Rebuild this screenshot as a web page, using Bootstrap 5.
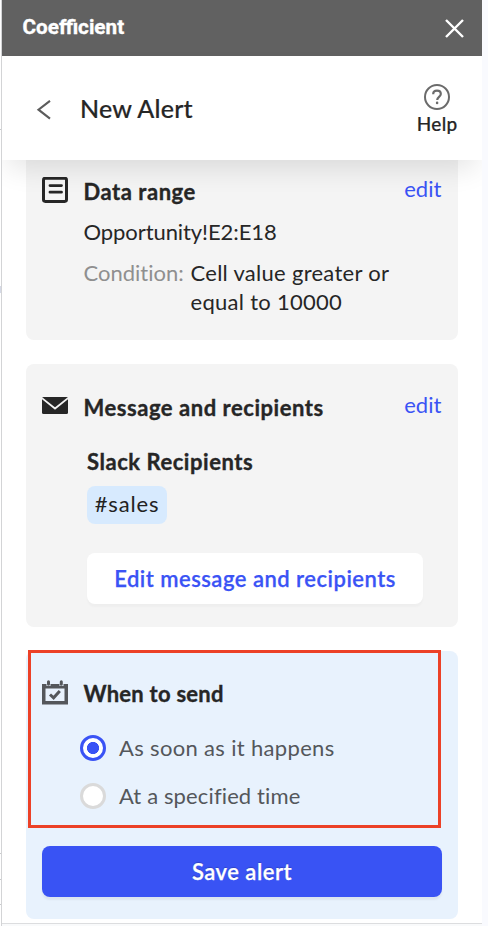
<!DOCTYPE html>
<html lang="en">
<head>
<meta charset="utf-8">
<meta name="viewport" content="width=device-width, initial-scale=1">
<title>Coefficient</title>
<link href="https://cdn.jsdelivr.net/npm/bootstrap@5.3.0/dist/css/bootstrap.min.css" rel="stylesheet">
<style>
body{font-family:Lato,"Open Sans",sans-serif;font-size:22px;line-height:29px;color:#262626;background:#f9fafe;height:926px;overflow:hidden;font-variant-ligatures:none}
.page-edge{width:2px;background:linear-gradient(90deg,#fff 1px,#d3d4d6 1px)}
.edge-tick{left:0;width:1px;height:1px;background:#c9cacc}
.tick-a{top:129px}.tick-b{top:286px;height:7px;background:#d5d9e6}.tick-c{top:853px}.tick-d{top:879px}.tick-e{top:904px}
.panel{width:480px}
.screen{height:923px}
.foot-rule{height:3px;border-top:1px solid #dcdddf;background:#f9fafb}
.title-bar{height:56px;background:#616161;padding:0 18px 0 20.5px}
.brand{font:700 20.7px/24px Roboto,sans-serif;margin-bottom:3px;font-variant-ligatures:normal;-webkit-text-stroke:.35px #fff}
.head{height:104px;padding:0 24.5px 0 33px;z-index:2;box-shadow:0 14px 26px -6px rgba(0,0,0,.11)}
.head-title{font-size:25px;font-weight:500;letter-spacing:.2px;margin-left:29px;-webkit-text-stroke:.2px #262626}
.help{font-size:19px;font-weight:500;line-height:24px;letter-spacing:.3px;padding-top:28px;-webkit-text-stroke:.2px #262626}
.help svg{margin-bottom:2px}
.sections{padding:0 24px}
.section-box{background:#f4f4f4;border-radius:8px;padding:0 16px}
.box-range{height:180px;padding-top:17px;border-radius:0 0 8px 8px}
.box-message{height:263px;padding-top:29px;margin-top:24px}
.box-when{height:268px;padding-top:28px;margin-top:24px;background:#e8f2fd}
.icon-col{width:41.5px;flex:none;height:29px}
.icon-col svg{display:block}
.heading{font-weight:700;letter-spacing:.54px;-webkit-text-stroke:.35px #262626}
.heading-tight{letter-spacing:.25px}
.edit{color:#3a53f5;margin:-3px .7px 0 0}
.opp{letter-spacing:-.08px;margin-top:11px}
.cond{margin-top:12px}
.muted-label{color:#8f8f8f;width:107px}
.spaced{letter-spacing:.28px}
.indent{margin-left:45px}
.slack{margin-top:25px}
.chip{background:#d7eafe;border-radius:8px;height:38px;width:80px;letter-spacing:.85px;margin-top:10px;padding-bottom:3px;color:#222}
.btn-soft,.btn-save{height:51px;border-radius:8px;font-size:22px;font-weight:600;line-height:29px;letter-spacing:.49px;border:0;padding:0;-webkit-text-stroke:.25px currentColor}
.btn-soft,.btn-soft:hover{width:336px;margin-top:29px;background:#fff;color:#3a53f5;box-shadow:0 3px 2px rgba(0,0,0,.025)}
.btn-save,.btn-save:hover{margin-top:36px;padding-bottom:1px;background:#3953f4;color:#fff;box-shadow:0 3px 2px rgba(0,0,0,.05);text-shadow:0 -1px 1px rgba(0,0,0,.2)}
.choice{margin:19px 0 0 38px;color:#54575b;gap:13px;height:29px;letter-spacing:.13px}
.first-choice{margin-top:25px;letter-spacing:.33px}
.choice .form-check-input{width:26px;height:26px;margin:0;float:none;border:3px solid #dadada;background:#fff;box-shadow:none}
.choice .form-check-input:checked{border-color:#3a53f5;background:radial-gradient(circle,#3a53f5 5.700px,#fff 6.400px)}
.callout-frame{left:28px;top:650px;width:413px;height:178px;border:3px solid #ec4127;pointer-events:none;z-index:3}
</style>
</head>
<body>
<div class="d-flex">
  <div class="page-edge"></div>
  <main class="panel overflow-hidden">
    <div class="screen bg-white">
      <header class="title-bar d-flex align-items-center justify-content-between text-white">
        <span class="brand">Coefficient</span>
        <svg width="19" height="19" viewBox="0 0 19 19" fill="none" stroke="#fff" stroke-width="2.4" role="button" aria-label="Close"><path d="M1 1l17 17M18 1L1 18"/></svg>
      </header>
      <div class="head bg-white position-relative d-flex justify-content-between">
        <div class="d-flex align-items-center">
          <svg class="mt-1" width="16" height="20" viewBox="0 0 16 20" fill="none" stroke="#5c5c5c" stroke-width="2.1" role="button" aria-label="Back"><path d="M15 .8L3.500 9.700 15 18.600"/></svg>
          <span class="head-title">New Alert</span>
        </div>
        <div class="help d-flex flex-column align-items-center">
          <svg width="26" height="26" viewBox="0 0 26 26" fill="none" stroke="#6b6b6b"><circle cx="13" cy="13" r="12" stroke-width="2"/><path d="M9.200 10.200c0-2.100 1.500-3.500 3.800-3.500s3.800 1.400 3.800 3.300c0 2.800-3.600 3-3.600 6" stroke-width="2.200"/><circle cx="13.100" cy="18.900" r="1.300" fill="#6b6b6b" stroke="none"/></svg>
          <span>Help</span>
        </div>
      </div>
      <div class="sections">
        <section class="section-box box-range d-flex">
          <div class="icon-col"><svg width="26" height="27" viewBox="0 0 26 27" fill="none" stroke="#262626" stroke-linecap="round"><rect x="1.500" y="1.200" width="23" height="23.200" rx="1.800" stroke-width="3"/><path d="M8 8.600h11.500M8 15.200h11.500" stroke-width="2.800"/></svg></div>
          <div class="flex-grow-1">
            <div class="d-flex justify-content-between"><span class="heading">Data range</span><a class="edit text-decoration-none" href="#">edit</a></div>
            <div class="opp">Opportunity!E2:E18</div>
            <div class="cond d-flex"><span class="muted-label flex-shrink-0">Condition:</span><span class="spaced">Cell value greater or<br>equal to 10000</span></div>
          </div>
        </section>
        <section class="section-box box-message">
          <div class="d-flex">
            <div class="icon-col pt-1"><svg width="26" height="17" viewBox="0 0 26 17"><rect width="26" height="17" rx="1.500" fill="#262626"/><path d="M0 1.200l13 10.300L26 1.200" fill="none" stroke="#f4f4f4" stroke-width="1.800"/></svg></div>
            <div class="flex-grow-1 d-flex justify-content-between"><span class="heading">Message and recipients</span><a class="edit text-decoration-none" href="#">edit</a></div>
          </div>
          <div class="indent">
            <div class="heading slack">Slack Recipients</div>
            <div class="chip d-flex align-items-center justify-content-center">#sales</div>
            <button type="button" class="btn btn-soft">Edit message and recipients</button>
          </div>
        </section>
        <section class="section-box box-when">
          <div class="d-flex">
            <div class="icon-col"><svg width="26" height="26" viewBox="0 0 26 26" fill="none"><path d="M0 5h26v20.500H0z" fill="#54575b"/><path d="M3.500 9.500h19v12.500h-19z" fill="#e8f2fd"/><path d="M4.500 1h4v6h-4zM17.500 1h4v6h-4z" fill="#e8f2fd"/><path d="M6.500 2.800v2.500M19.300 2.800v2.500" stroke="#54575b" stroke-width="3" stroke-linecap="round"/><path d="M8 15.500l3.600 3.300 6.200-6.800" stroke="#54575b" stroke-width="3"/></svg></div>
            <span class="heading heading-tight">When to send</span>
          </div>
          <label class="choice first-choice d-flex align-items-center"><input class="form-check-input" type="radio" name="when" checked><span>As soon as it happens</span></label>
          <label class="choice d-flex align-items-center"><input class="form-check-input" type="radio" name="when"><span>At a specified time</span></label>
          <button type="button" class="btn btn-save w-100">Save alert</button>
        </section>
      </div>
    </div>
    <div class="foot-rule"></div>
  </main>
</div>
<i class="edge-tick tick-a position-absolute"></i><i class="edge-tick tick-b position-absolute"></i><i class="edge-tick tick-c position-absolute"></i><i class="edge-tick tick-d position-absolute"></i><i class="edge-tick tick-e position-absolute"></i>
<div class="callout-frame position-absolute"></div>
<script src="https://cdn.jsdelivr.net/npm/bootstrap@5.3.0/dist/js/bootstrap.bundle.min.js"></script>
</body>
</html>
